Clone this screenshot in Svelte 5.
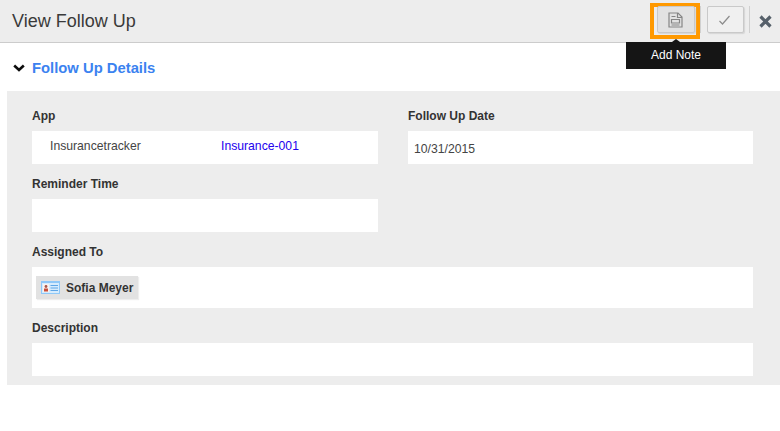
<script>
  const noteIcon = "M1 1h9l4 4v10H1z";
</script>

<div class="page">
  <header class="top">
    <h1>View Follow Up</h1>
    <div class="actions">
      <div class="note-wrap">
        <button type="button" class="tool note" aria-label="Add Note">
          <svg width="15" height="16" viewBox="0 0 15 16" fill="none" stroke="#858585" stroke-width="1.2">
            <path d={noteIcon} />
            <path d="M9.5 1v4.5H14M3.5 4.5h4M3.5 7.5h8v3.5h-8zM3.5 13h8" />
          </svg>
        </button>
        <div class="tip">Add Note</div>
      </div>
      <span class="sep"></span>
      <button type="button" class="tool check" aria-label="Save">
        <svg width="13" height="11" viewBox="0 0 13 11" fill="none" stroke="#8c8c8c" stroke-width="1.2">
          <path d="M1.5 6l3 3 7-8" />
        </svg>
      </button>
      <span class="sep"></span>
      <svg class="close" width="13" height="13" viewBox="0 0 13 13" stroke="#56606a" stroke-width="3.2" aria-label="Close">
        <path d="M1.5 1.5l10 10M11.5 1.5l-10 10" />
      </svg>
    </div>
  </header>

  <section>
    <div class="section-head">
      <svg width="12" height="8" viewBox="0 0 12 8" fill="none" stroke="#0d0d0d" stroke-width="2.6">
        <path d="M1.2 1.5L6 6l4.8-4.5" />
      </svg>
      <h2>Follow Up Details</h2>
    </div>

    <div class="details">
      <div class="row two">
        <div class="field">
          <span class="label">App</span>
          <div class="value app">
            <span class="app-name">Insurancetracker</span>
            <span class="app-link">Insurance-001</span>
          </div>
        </div>
        <div class="field">
          <span class="label">Follow Up Date</span>
          <div class="value date">10/31/2015</div>
        </div>
      </div>

      <div class="row two">
        <div class="field">
          <span class="label">Reminder Time</span>
          <div class="value"></div>
        </div>
      </div>

      <div class="field">
        <span class="label">Assigned To</span>
        <div class="value assigned">
          <span class="chip">
            <svg width="19" height="13" viewBox="0 0 19 13">
              <rect width="19" height="13" fill="#8fc8f8" />
              <rect x="1" y="2" width="17" height="10" fill="#d6ecfd" />
              <rect x="2" y="3" width="6" height="8" fill="#fbf3ee" />
              <circle cx="5" cy="5.5" r="1.4" fill="#a8554a" />
              <rect x="3" y="7.5" width="4" height="3" fill="#c9503c" />
              <path d="M9.5 4.5h7.5M9.5 7h7.5M9.5 9.5h7.5" stroke="#5fa6e6" stroke-width="1" />
            </svg>
            Sofia Meyer
          </span>
        </div>
      </div>

      <div class="field">
        <span class="label">Description</span>
        <div class="value"></div>
      </div>
    </div>
  </section>
</div>

<style>
  :global(body) {
    background: #fff;
  }

  .page {
    width: 780px;
    height: 431px;
    overflow: hidden;
    font-family: "Liberation Sans", Arial, sans-serif;
    color: #333;
  }

  .top {
    height: 43px;
    box-sizing: border-box;
    display: flex;
    justify-content: space-between;
    align-items: center;
    padding: 0 8px 0 12px;
    background: #ededed;
    border-bottom: 1px solid #ccc;
  }

  h1 {
    margin: 0;
    font-size: 18px;
    font-weight: 400;
    color: #3a3a3a;
  }

  .actions {
    display: flex;
    align-items: center;
  }

  .note-wrap {
    position: relative;
    width: 50px;
    height: 36px;
    box-sizing: border-box;
    border: 4px solid #ff9900;
    display: flex;
    align-items: flex-start;
    padding-left: 3px;
  }

  .tool {
    box-sizing: border-box;
    padding: 0;
    display: flex;
    align-items: center;
    justify-content: center;
    border: 1px solid #c9c9c9;
    border-radius: 2px;
    box-shadow: 1px 1px 1px #d5d5d5;
  }

  .note {
    width: 38px;
    height: 27px;
    margin-top: -1px;
    padding-right: 2px;
    background: #e2e2e2;
  }

  .check {
    width: 37px;
    height: 27px;
    padding: 2px 3px 0 0;
    background: #f0f0f0;
    margin: 0 5px 3px 6px;
  }

  .sep {
    width: 1px;
    height: 27px;
    margin-bottom: 3px;
    background: #d0d0d0;
  }

  .close {
    margin-left: 9px;
    margin-top: 1px;
  }

  .tip {
    position: absolute;
    top: 35px;
    left: -28px;
    width: 100px;
    height: 27px;
    padding-bottom: 1px;
    box-sizing: border-box;
    background: #151515;
    color: #fff;
    font-size: 12px;
    display: flex;
    align-items: center;
    justify-content: center;
  }

  .tip::before {
    content: "";
    position: absolute;
    top: -3px;
    left: 46px;
    border-left: 4px solid transparent;
    border-right: 4px solid transparent;
    border-bottom: 3px solid #151515;
  }

  .section-head {
    height: 48px;
    box-sizing: border-box;
    padding: 2px 0 0 13px;
    display: flex;
    align-items: center;
    gap: 7px;
  }

  h2 {
    margin: 0;
    font-size: 14.8px;
    font-weight: 700;
    color: #3b82f0;
  }

  .details {
    margin: 0 0 0 7px;
    width: 773px;
    box-sizing: border-box;
    padding: 18px 27px 9px 25px;
    background: #ededed;
    display: flex;
    flex-direction: column;
    gap: 13px;
  }

  .row.two {
    display: grid;
    grid-template-columns: 346px 345px;
    gap: 30px;
  }

  .field {
    display: flex;
    flex-direction: column;
    gap: 8px;
  }

  .label {
    font-size: 12px;
    font-weight: 700;
    line-height: 14px;
    color: #333;
  }

  .value {
    height: 33px;
    background: #fff;
    font-size: 12.2px;
    color: #444;
    display: flex;
    align-items: center;
  }

  .app {
    padding-left: 18px;
    padding-bottom: 4px;
    box-sizing: border-box;
  }

  .app-name {
    width: 171px;
  }

  .app-link {
    color: #2200ee;
  }

  .date {
    padding-left: 6px;
    padding-top: 2px;
    box-sizing: border-box;
  }

  .assigned {
    height: 41px;
    padding-left: 4px;
  }

  .chip {
    height: 23px;
    padding: 0 5px;
    display: flex;
    align-items: center;
    gap: 6px;
    background: #e2e2e2;
    color: #333;
    font-size: 12px;
    font-weight: 700;
    box-shadow: 1px 1px 1px #eee;
  }
</style>
